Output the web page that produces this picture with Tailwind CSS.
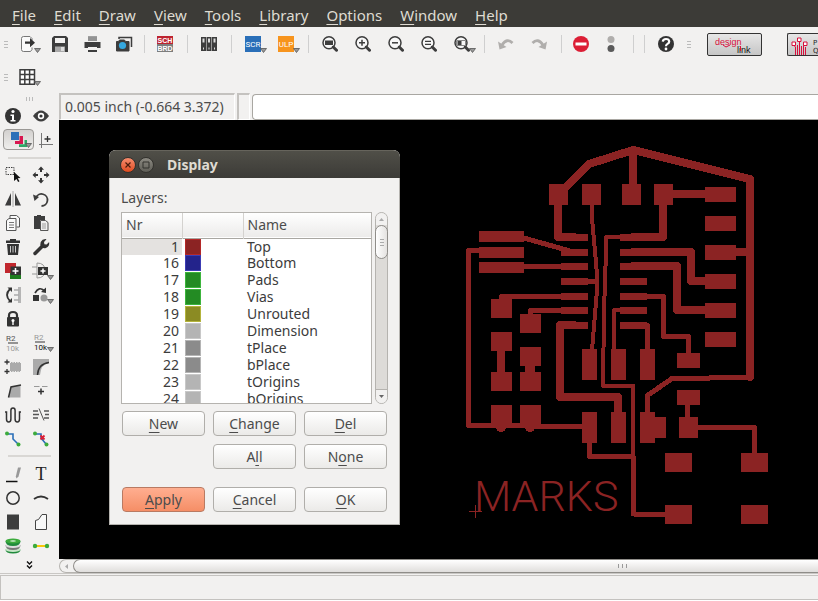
<!DOCTYPE html>
<html lang="en">
<head>
<meta charset="utf-8">
<title>Board editor</title>
<script src="https://cdn.jsdelivr.net/npm/@tailwindcss/browser@4"></script>
</head>
<body class="h-screen overflow-hidden bg-[#f2f1f0] font-['Noto_Sans','Open_Sans',sans-serif] text-sm leading-5 text-[#4c4c4c]">
<svg class="hidden">
  <symbol id="dd" viewBox="0 0 7 5"><path d="M.5.5h6L3.500 4.500z" fill="#999" stroke="#555" stroke-width=".8"/></symbol>
  <symbol id="lens" viewBox="0 0 16 16"><circle cx="7" cy="6.800" r="6" fill="#f8f8f8" stroke="#3d3d3d" stroke-width="1.500"/><path d="M11.300 11l3.200 3.200" stroke="#3d3d3d" stroke-width="3" stroke-linecap="round"/></symbol>
</svg>
<div class="flex h-full flex-col">
  <nav class="flex h-[27px] shrink-0 items-center gap-[18px] bg-[#3c3b37] px-3 pt-[3px] text-[15px] text-[#dfdbd2]" aria-label="Menu">
    <a href="#"><u class="underline-offset-3">F</u>ile</a>
    <a href="#"><u class="underline-offset-3">E</u>dit</a>
    <a href="#"><u class="underline-offset-3">D</u>raw</a>
    <a href="#"><u class="underline-offset-3">V</u>iew</a>
    <a href="#"><u class="underline-offset-3">T</u>ools</a>
    <a href="#"><u class="underline-offset-3">L</u>ibrary</a>
    <a href="#"><u class="underline-offset-3">O</u>ptions</a>
    <a href="#"><u class="underline-offset-3">W</u>indow</a>
    <a href="#"><u class="underline-offset-3">H</u>elp</a>
  </nav>

  <div class="flex h-[34px] shrink-0 items-center overflow-hidden *:shrink-0">
    <span class="flex w-3 flex-col items-center gap-[2px]"><i class="h-px w-1 bg-[#bbb]"></i><i class="h-px w-1 bg-[#bbb]"></i><i class="h-px w-1 bg-[#bbb]"></i></span>
    <button class="w-8" aria-label="Open"><svg class="h-6 w-8" viewBox="0 0 32 24"><path d="M20 8V6.500L18 4.500h-6.500a2 2 0 0 0-2 2v11a2 2 0 0 0 2 2h7l1.500-2v-2" fill="#fafafa" stroke="#777"/><path d="M13 9.500h5V6l5 4.700-5 4.600v-3.500h-5z" fill="#333"/><use href="#dd" x="22" y="16" width="7" height="5"/></svg></button>
    <button class="w-8" aria-label="Save"><svg class="h-6 w-8" viewBox="0 0 32 24"><path d="M10 4h12l2 2v14H8V6z" fill="#3d3d3d"/><path d="M11 6h10v5H11z" fill="#f2f1f0"/><path d="M11 14.500h10V20H11z" fill="#aaa"/><path d="M17 15h3v4h-3z" fill="#ddd"/></svg></button>
    <button class="w-8" aria-label="Print"><svg class="h-6 w-8" viewBox="0 0 32 24"><path d="M12 4h9v5h-9z" fill="#a0a0a0"/><path d="M12 6h9M12 8h9" stroke="#777" stroke-width=".6"/><path d="M8.500 10h16v6h-16z" fill="#3d3d3d"/><path d="M12 14.500h9V20h-9z" fill="#f2f1f0"/><path d="M12 13.500h9v1.500h-9zM12 18h9v2h-9z" fill="#3d3d3d"/></svg></button>
    <button class="w-8" aria-label="Export image"><svg class="h-6 w-8" viewBox="0 0 32 24"><path d="M11 7V5.500h12.500V15" fill="none" stroke="#3d3d3d" stroke-width="1.500"/><path d="M8.500 9.500h2l1-1.500h5l1 1.500h3.500v9.500H8.500z" fill="#3d3d3d" stroke="#3d3d3d"/><circle cx="14.500" cy="13.500" r="3.600" fill="#35a8e0"/></svg></button>
    <span class="flex w-[9px] justify-center"><i class="h-[18px] w-px bg-[#cfcfcf]"></i></span>
    <button class="w-[33px]" aria-label="Schematic/Board"><svg class="h-6 w-8" viewBox="0 0 32 24"><path d="M8 4h16v8H8z" fill="#be2430"/><path d="M8 12h16v8H8z" fill="#7d7d7d"/><g fill="#fff" font-family="Liberation Sans" font-weight="bold" font-size="7" text-anchor="middle"><text x="16" y="10.500">SCH</text><text x="16" y="18.500">BRD</text></g></svg></button>
    <span class="flex w-[11px] justify-center"><i class="h-[18px] w-px bg-[#cfcfcf]"></i></span>
    <button class="w-[33px]" aria-label="Use library"><svg class="h-6 w-8" viewBox="0 0 32 24"><path d="M8 5h5v14H8zM13.500 5h5v14h-5zM19 5h5v14h-5z" fill="#3d3d3d"/><path d="M9.500 6.500h2v4h-2zM15 6.500h2v4h-2zM20.500 6.500h2v4h-2zM10 15.500h1v2h-1zM15.500 15.500h1v2h-1zM21 15.500h1v2h-1z" fill="#ddd"/></svg></button>
    <span class="flex w-[11px] justify-center"><i class="h-[18px] w-px bg-[#cfcfcf]"></i></span>
    <button class="w-[33px]" aria-label="Script"><svg class="h-6 w-8" viewBox="0 0 32 24"><path d="M8 4h16v16H8z" fill="#2a6fb8"/><text x="16" y="15" fill="#fff" font-family="Roboto" font-size="8" text-anchor="middle">SCR</text><use href="#dd" x="23" y="16" width="7" height="5"/></svg></button>
    <button class="w-[33px]" aria-label="Run ULP"><svg class="h-6 w-8" viewBox="0 0 32 24"><path d="M8 4h16v16H8z" fill="#f7941d"/><text x="16" y="15" fill="#fff" font-family="Roboto" font-size="8" text-anchor="middle">ULP</text><use href="#dd" x="23" y="16" width="7" height="5"/></svg></button>
    <span class="flex w-[11px] justify-center"><i class="h-[18px] w-px bg-[#cfcfcf]"></i></span>
    <button class="w-[33px]" aria-label="Fit"><svg class="h-6 w-8" viewBox="0 0 32 24"><use href="#lens" x="8" y="4" width="16" height="16"/><path d="M11 8.500h8v4.500h-8z" fill="#3d3d3d"/></svg></button>
    <button class="w-[33px]" aria-label="Zoom in"><svg class="h-6 w-8" viewBox="0 0 32 24"><use href="#lens" x="8" y="4" width="16" height="16"/><path d="M12 10.800h6M15 7.800v6" stroke="#3d3d3d" stroke-width="1.500"/></svg></button>
    <button class="w-[33px]" aria-label="Zoom out"><svg class="h-6 w-8" viewBox="0 0 32 24"><use href="#lens" x="8" y="4" width="16" height="16"/><path d="M12 10.800h6" stroke="#3d3d3d" stroke-width="1.500"/></svg></button>
    <button class="w-[33px]" aria-label="Redraw"><svg class="h-6 w-8" viewBox="0 0 32 24"><use href="#lens" x="8" y="4" width="16" height="16"/><path d="M12 9.300h6M12 12.300h6" stroke="#3d3d3d" stroke-width="1.300"/></svg></button>
    <button class="w-[33px]" aria-label="Select zoom"><svg class="h-6 w-8" viewBox="0 0 32 24"><use href="#lens" x="8" y="4" width="16" height="16"/><path d="M10.500 8.500h9v5h-9z" fill="none" stroke="#888"/><path d="M11.500 9h4v4h-4z" fill="#3d3d3d"/><use href="#dd" x="23" y="16" width="7" height="5"/></svg></button>
    <span class="flex w-[11px] justify-center"><i class="h-[18px] w-px bg-[#cfcfcf]"></i></span>
    <button class="w-[33px]" aria-label="Undo"><svg class="h-6 w-8" viewBox="0 0 32 24"><path d="M22.500 11Q17 5.500 12 13" fill="none" stroke="#b0aeac" stroke-width="2.800"/><path d="M8 9.500l8.500 5.500-7 2.500z" fill="#b0aeac"/></svg></button>
    <button class="w-[33px]" aria-label="Redo"><svg class="h-6 w-8" viewBox="0 0 32 24"><path d="M9.500 11Q15 5.500 20 13" fill="none" stroke="#b0aeac" stroke-width="2.800"/><path d="M24 9.500L15.500 15l7 2.500z" fill="#b0aeac"/></svg></button>
    <span class="flex w-[11px] justify-center"><i class="h-[18px] w-px bg-[#cfcfcf]"></i></span>
    <button class="flex w-7 justify-center" aria-label="Stop"><svg class="h-6 w-4" viewBox="8 0 16 24"><circle cx="16" cy="12" r="8" fill="#dc1e35"/><path d="M10.500 10.500h11v3h-11z" fill="#fff"/></svg></button>
    <button class="flex w-8 justify-center" aria-label="Go"><svg class="h-6 w-4" viewBox="8 0 16 24"><circle cx="16" cy="7.500" r="3.500" fill="#b0aeac"/><circle cx="16" cy="16.500" r="3.500" fill="#5a5a5a"/></svg></button>
    <span class="ml-px flex w-[11px] justify-center"><i class="h-[18px] w-px bg-[#cfcfcf]"></i></span>
    <span class="flex w-[11px] justify-center"><i class="h-[18px] w-px bg-[#cfcfcf]"></i></span>
    <button class="w-[33px]" aria-label="Help"><svg class="h-6 w-8" viewBox="0 0 32 24"><circle cx="16" cy="12" r="8" fill="#333"/><path d="M12.800 9.700q.2-2.700 3.200-2.700t3.200 2.400q0 1.600-1.700 2.500-1.500.8-1.500 2.300" fill="none" stroke="#fff" stroke-width="2.200"/><circle cx="16" cy="17" r="1.400" fill="#fff"/></svg></button>
    <span class="flex w-3 flex-col items-center gap-[2px]"><i class="h-px w-1 bg-[#bbb]"></i><i class="h-px w-1 bg-[#bbb]"></i><i class="h-px w-1 bg-[#bbb]"></i></span>
    <button class="ml-3 h-[23px] w-[55px] rounded-[2px] border border-[#333] bg-linear-to-b from-[#e6e6e6] to-[#c6c6c6]" aria-label="designlink"><svg class="h-[21px] w-[53px]" viewBox="0 0 53 21"><text x="7" y="11" font-family="Liberation Sans" font-size="9" fill="#d8103c">design</text><text x="29" y="19" font-family="Liberation Sans" font-size="9" fill="#111">link</text><path d="M15 11l3 2 4-2" fill="none" stroke="#d8103c"/><path d="M32.500 12v5" stroke="#d8103c"/></svg></button>
    <button class="ml-[25px] h-[23px] min-w-0 flex-1 !shrink overflow-hidden rounded-l-[2px] border border-r-0 border-[#333] bg-linear-to-b from-[#e6e6e6] to-[#c6c6c6]" aria-label="PCB quote"><svg class="h-[21px] w-full" viewBox="0 0 30 21" preserveAspectRatio="xMinYMid slice" fill="none"><g stroke="#d8103c"><path d="M7.500 21v-8l-2-2M9.500 21V11M11.500 21V8M13.500 21v-9M15.500 21V11M17.500 21v-8"/><path d="M4 8h3.500v3.500H4zM9.500 4H13v3.500H9.500zM15.500 8H19v3.500h-3.500z" fill="#fff"/></g><g fill="#222" font-family="DejaVu Sans" font-size="7"><text x="25" y="11">P</text><text x="25" y="19">Q</text></g></svg></button>
  </div>

  <div class="flex h-8 shrink-0 items-center">
    <span class="flex w-3 flex-col items-center gap-[2px]"><i class="h-px w-1 bg-[#bbb]"></i><i class="h-px w-1 bg-[#bbb]"></i><i class="h-px w-1 bg-[#bbb]"></i></span>
    <button class="w-8" aria-label="Grid"><svg class="h-6 w-8" viewBox="0 0 32 24"><path d="M8 4.800h14.500v14.500H8zM8 9.600h14.500M8 14.400h14.500M12.800 4.800v14.500M17.600 4.800v14.500" fill="#fff" stroke="#3d3d3d" stroke-width="1.500"/><use href="#dd" x="22" y="16" width="7" height="5"/></svg></button>
  </div>

  <div class="flex min-h-0 flex-1">
    <aside class="flex w-[59px] shrink-0 flex-col">
      <span class="flex h-[11px] items-center justify-center gap-[2px]"><i class="h-1 w-px bg-[#bbb]"></i><i class="h-1 w-px bg-[#bbb]"></i><i class="h-1 w-px bg-[#bbb]"></i></span>
      <div class="grid w-14 grid-cols-2 [&_button]:h-6 [&_svg]:h-6 [&_svg]:w-7">
        <button aria-label="Info"><svg viewBox="0 0 28 24"><circle cx="13" cy="12" r="8" fill="#333"/><circle cx="13" cy="7.500" r="1.600" fill="#fff"/><path d="M10.500 10.500H14V16h1.500v1.500h-5V16H12v-4h-1.500z" fill="#fff"/></svg></button>
        <button aria-label="Show"><svg viewBox="0 0 28 24"><path d="M5 12q8-11 16 0-8 11-16 0z" fill="#3d3d3d"/><circle cx="13" cy="12" r="3.200" fill="#fff"/><circle cx="13" cy="12" r="1.600" fill="#333"/></svg></button>
        <button aria-label="Display" aria-pressed="true"><svg class="overflow-visible" viewBox="0 0 28 24"><defs><linearGradient id="pressed" x2="0" y2="1"><stop stop-color="#d2d0ce"/><stop offset="1" stop-color="#f0efed"/></linearGradient></defs><rect x="3.500" y="1.500" width="30" height="20" rx="3.500" fill="url(#pressed)" stroke="#9a9895"/><path d="M11 4h8v8h-8z" fill="#2a6fb8"/><path d="M19.500 8H23v8h-8v-3h4.500z" fill="#d8174f"/><path d="M24.500 12H27v7h-8v-2.800h5.500z" fill="#2fa866"/><use href="#dd" x="25" y="15" width="7" height="5"/></svg></button>
        <button aria-label="Mark"><svg viewBox="0 0 28 24"><path d="M13.500 5v15M11 16.500h14" stroke="#777"/><path d="M19.500 8v6M16.500 11h6" stroke="#333" stroke-width="1.300"/></svg></button>
      </div>
      <hr class="mx-2 mt-[5px] mb-1 border-t-2 border-[#d9d7d4]">
      <div class="grid w-14 grid-cols-2 [&_button]:h-6 [&_svg]:h-6 [&_svg]:w-7">
        <button aria-label="Group"><svg viewBox="0 0 28 24"><path d="M6 4.500h8v7H6z" fill="none" stroke="#3d3d3d" stroke-dasharray="1.500 1"/><path d="M14 9l6.500 6-2.800.3 1.800 3-1.400.8-1.600-3.200L14 18z" fill="#111"/></svg></button>
        <button aria-label="Move"><svg viewBox="0 0 28 24"><path d="M13 3.500l3 3.200h-2V9h-2V6.700h-2zM13 20.500l3-3.200h-2V15h-2v2.300h-2zM4.500 12l3.200-3v2H10v2H7.700v2zM21.500 12l-3.200-3v2H16v2h2.300v2z" fill="#333"/></svg></button>
        <button aria-label="Mirror"><svg viewBox="0 0 28 24"><path d="M11 6v12.500H5zM15 6v12.500h6z" fill="#3d3d3d"/><path d="M13 4v16" stroke="#aaa"/></svg></button>
        <button aria-label="Rotate"><svg viewBox="0 0 28 24"><path d="M8 10.500a6 6 0 1 1 5.500 8.500" fill="none" stroke="#3d3d3d" stroke-width="1.800"/><path d="M5 7.500l1.500 6.500 4.500-4z" fill="#3d3d3d"/></svg></button>
        <button aria-label="Copy"><svg viewBox="0 0 28 24"><path d="M10 7V4.500h6.500l3 2.500v9h-3" fill="#f8f8f8" stroke="#555"/><path d="M6.500 9.500L9 7.500h7v12H6.500z" fill="#fafafa" stroke="#555"/><path d="M9 11.500h5M9 14h5M9 16.500h5" stroke="#777"/></svg></button>
        <button aria-label="Paste"><svg viewBox="0 0 28 24"><path d="M6 5h3V4h4v1h4v4h-5v9H6z" fill="#3d3d3d"/><path d="M12.500 9.500h5l2.500 2v8h-7.500z" fill="#eee" stroke="#555"/><path d="M14 13h4M14 15h4M14 17h4" stroke="#888" stroke-width=".8"/></svg></button>
        <button aria-label="Delete"><svg viewBox="0 0 28 24"><path d="M6 5.500h4V4h6v1.500h4V8H6zM7 9h12l-1 11H8z" fill="#333"/><path d="M10.500 11v6.500M13 11v6.500M15.500 11v6.500" stroke="#ddd" stroke-width=".9"/></svg></button>
        <button aria-label="Change"><svg viewBox="0 0 28 24"><path d="M7 18.500l7-7" stroke="#333" stroke-width="3.500" stroke-linecap="round"/><path d="M18.500 4.200L16 7l.4 2.200 2.200.4 2.500-2.500q.8 4.600-3.200 5.900-2.300.6-4.300-.8Q11.500 9.500 12.700 7q1.800-3.400 5.800-2.800z" fill="#333"/></svg></button>
        <button aria-label="Add"><svg viewBox="0 0 28 24"><path d="M5 4h11v10H5z" fill="#c1272d"/><path d="M10 14h11v6H10z" fill="#1e7d1e"/><path d="M10.500 7.500h10.500V16H10.500z" fill="#333"/><path d="M12.500 12h6M15.500 9v6" stroke="#fff" stroke-width="1.500"/></svg></button>
        <button aria-label="Replace"><svg viewBox="0 0 28 24"><path d="M4 8h5M4 15h5M9 4v15M9 4q8 0 8 7.500T9 19" fill="none" stroke="#999"/><path d="M10 8h10v8H10z" fill="#333"/><path d="M12.500 12h5M15 9.500v5" stroke="#fff" stroke-width="1.500"/><use href="#dd" x="19" y="16" width="7" height="5"/></svg></button>
        <button aria-label="Pinswap"><svg viewBox="0 0 28 24"><path d="M18 4h3v16h-3z" fill="#b5b5b5"/><path d="M14 7h5M14 12h5M14 17h5" stroke="#aaa" stroke-width="1.500"/><path d="M10 6q-6 6 0 12" fill="none" stroke="#333" stroke-width="1.800"/><path d="M7.500 4.500H12V9zM7.500 19.500H12V15z" fill="#333"/></svg></button>
        <button aria-label="Gateswap"><svg viewBox="0 0 28 24"><path d="M7 10q4-7 9-2.500" fill="none" stroke="#333" stroke-width="1.700"/><path d="M18 4.500V10l-5-1z" fill="#333"/><path d="M5 12h6v6H5z" fill="#333"/><circle cx="16" cy="15" r="3.500" fill="#999"/><use href="#dd" x="19" y="16" width="7" height="5"/></svg></button>
        <button aria-label="Lock"><svg viewBox="0 0 28 24"><path d="M9 12V8.500q0-3.500 4-3.500t4 3.500V12" fill="none" stroke="#333" stroke-width="2.200"/><rect x="7" y="10" width="12" height="9.500" rx="1" fill="#333"/><path d="M12.300 14h1.400v4h-1.400z" fill="#fff"/><circle cx="13" cy="13.500" r="1.500" fill="#fff"/></svg></button>
        <span></span>
        <button aria-label="Name"><svg viewBox="0 0 28 24"><g font-family="Roboto" font-size="8"><text x="6" y="9.500" fill="#555">R2</text><text x="6" y="20" fill="#999">10k</text></g><path d="M8 12h10" stroke="#555" stroke-width="1.200"/></svg></button>
        <button aria-label="Value"><svg viewBox="0 0 28 24"><g font-family="Roboto" font-size="8"><text x="6" y="8.500" fill="#999">R2</text><text x="6" y="19" fill="#111">10k</text></g><path d="M7 11h10" stroke="#555" stroke-width="1.200"/><use href="#dd" x="19" y="16" width="7" height="5"/></svg></button>
        <button aria-label="Smash"><svg viewBox="0 0 28 24"><path d="M10 8h11v8H10z" fill="#aaa"/><path d="M11 7.500h10M11 16.500h10" stroke="#aaa" stroke-dasharray="1.500 1"/><path d="M7 4.500v5M4.500 7h5M7 14v5M4.500 16.500h5" stroke="#333" stroke-width="1.300"/></svg></button>
        <button aria-label="Miter"><svg viewBox="0 0 28 24"><path d="M5 4h16v4q-8 1-9 12H5z" fill="#aaa"/><path d="M9.500 20Q10 9 21 7.500" fill="none" stroke="#333" stroke-width="1.500"/></svg></button>
        <button aria-label="Split"><svg viewBox="0 0 28 24"><path d="M8.500 18.500L11 8l9.500-2v12.500z" fill="#aaa"/><path d="M8.500 18.500L11 8l10-2" fill="none" stroke="#333" stroke-width="1.500"/></svg></button>
        <button aria-label="Optimize"><svg viewBox="0 0 28 24"><path d="M6 7.500h5.500M14 7.500h5.500" stroke="#999"/><path d="M13 9.500v6M10 12.500h6" stroke="#333" stroke-width="1.500"/></svg></button>
        <button aria-label="Meander"><svg viewBox="0 0 28 24"><path d="M5 9h1.500v7q0 3 2.200 3t2.200-3V7.500q0-2.500 2.100-2.500t2.100 2.500V16q0 3 2.200 3t2.200-3V9H21" fill="none" stroke="#333" stroke-width="1.500"/></svg></button>
        <button aria-label="Ratsnest gap"><svg viewBox="0 0 28 24"><path d="M5 8h5M5 11.500h6M5 15h5M16 8h5M17 11.500h4M16 15h5" stroke="#555" stroke-width="1.300"/><path d="M11 5.500l5 12" stroke="#555"/></svg></button>
        <button aria-label="Route"><svg viewBox="0 0 28 24"><path d="M8 7h5v5l5 5" fill="none" stroke="#2a6fb8" stroke-width="1.600"/><circle cx="7" cy="6.500" r="2" fill="#3cab3c"/><circle cx="18.500" cy="17.500" r="2" fill="#3cab3c"/></svg></button>
        <button aria-label="Ripup"><svg viewBox="0 0 28 24"><path d="M8 7h5v4l5 6" fill="none" stroke="#2a6fb8" stroke-width="1.600"/><circle cx="7" cy="6.500" r="2" fill="#3cab3c"/><circle cx="18.500" cy="17.500" r="2" fill="#3cab3c"/><path d="M12.500 8.500l4 4M16.500 8.500l-4 4" stroke="#dc1e35" stroke-width="1.800"/></svg></button>
      </div>
      <hr class="mx-2 mt-1 mb-[5px] border-t-2 border-[#d9d7d4]">
      <div class="grid w-14 grid-cols-2 [&_button]:h-6 [&_svg]:h-6 [&_svg]:w-7">
        <button aria-label="Wire"><svg viewBox="0 0 28 24"><path d="M6 19.500h11.500" stroke="#111" stroke-width="1.500"/><path d="M18 5.500h3l-2.500 9-2 2-.7-2z" fill="#999"/></svg></button>
        <button aria-label="Text"><svg viewBox="0 0 28 24"><text x="13" y="17.500" text-anchor="middle" font-family="Liberation Serif" font-size="18" fill="#222">T</text></svg></button>
        <button aria-label="Circle"><svg viewBox="0 0 28 24"><circle cx="13" cy="12" r="6.200" fill="none" stroke="#333" stroke-width="1.500"/></svg></button>
        <button aria-label="Arc"><svg viewBox="0 0 28 24"><path d="M6 13q7-5 14 0" fill="none" stroke="#333" stroke-width="1.800"/></svg></button>
        <button aria-label="Rectangle"><svg viewBox="0 0 28 24"><path d="M7 4.500h12v15H7z" fill="#3d3d3d"/></svg></button>
        <button aria-label="Polygon"><svg viewBox="0 0 28 24"><path d="M7.500 19.500v-9l3-1 3.500-5h4.500v15z" fill="#f8f8f8" stroke="#444"/></svg></button>
        <button aria-label="Via"><svg viewBox="0 0 28 24"><path d="M5.500 15.500q0 4 7.500 4t7.500-4z" fill="#1f8a3b"/><ellipse cx="13" cy="15.500" rx="7.500" ry="2.500" fill="#c8e6c8"/><path d="M5.500 11q0 5 7.500 5t7.500-5z" fill="#777"/><ellipse cx="13" cy="11.500" rx="7.500" ry="2.500" fill="#ddd"/><path d="M5.500 7q0 5 7.500 5t7.500-5z" fill="#1f8a3b"/><ellipse cx="13" cy="7" rx="7.500" ry="2.500" fill="#3cab3c"/><ellipse cx="13" cy="7" rx="3" ry=".8" fill="#d6f0d6"/></svg></button>
        <button aria-label="Signal"><svg viewBox="0 0 28 24"><path d="M7 12h12" stroke="#f7c80a" stroke-width="2"/><circle cx="7" cy="12" r="2.200" fill="#3cab3c"/><circle cx="19" cy="12" r="2.200" fill="#3cab3c"/></svg></button>
      </div>
      <button class="flex h-[14px] items-center justify-center" aria-label="More tools"><svg class="h-2 w-[7px]" viewBox="0 0 7 8"><path d="M1 .5l2.500 2.500L6 .5M1 4.500L3.500 7 6 4.500" fill="none" stroke="#111" stroke-width="1.400"/></svg></button>
    </aside>

    <main class="flex min-w-0 flex-1 flex-col">
      <div class="flex h-[27px] shrink-0 gap-[2px]">
        <output class="w-[176px] shrink-0 border-t-2 border-r border-b border-l-2 border-[#c4c2bf] border-r-white border-b-white pl-1 leading-6 whitespace-nowrap">0.005 inch (-0.664 3.372)</output>
        <span class="w-[13px] shrink-0 border-t-2 border-r border-b border-l-2 border-[#c4c2bf] border-r-white border-b-white"></span>
        <input aria-label="Command" class="mt-px h-[26px] min-w-0 flex-1 rounded-l-[4px] border border-r-0 border-[#a9a7a2] bg-white px-2">
      </div>

      <div class="relative min-h-0 flex-1 overflow-hidden bg-black">
        <svg class="absolute top-0 left-0 h-[439px] w-[759px]" viewBox="59 120 759 439" role="img" aria-label="Board layout" shape-rendering="crispEdges">
          <g fill="#8b2323">
            <path d="M549 184h19v21h-19zM582 184h19v21h-19zM622 184h19v21h-19zM654 184h19v21h-19z"/>
            <path d="M561 234h27v7h-27zM561 249h27v7h-27zM561 263h27v7h-27zM561 278h27v7h-27zM561 293h27v7h-27zM561 307h27v7h-27zM561 322h27v7h-27z"/>
            <path d="M620 234h27v7h-27zM620 249h27v7h-27zM620 263h27v7h-27zM620 278h27v7h-27zM620 293h27v7h-27zM620 307h27v7h-27zM620 322h27v7h-27z"/>
            <path d="M479 231h45v11h-45zM479 247h45v11h-45zM479 262h45v11h-45z"/>
            <path d="M491 299h21v19h-21zM520 314h21v19h-21zM491 332h21v19h-21zM520 347h21v19h-21zM491 372h21v19h-21zM520 372h21v19h-21zM491 405h21v19h-21zM520 405h21v19h-21z"/>
            <path d="M582 349h15v31h-15zM611 349h15v31h-15zM640 349h15v31h-15zM582 412h15v31h-15zM611 412h15v31h-15zM640 412h15v31h-15zM647 417h19v21h-19z"/>
            <path d="M705 187h31v15h-31zM705 216h31v15h-31zM705 245h31v15h-31zM705 274h31v15h-31zM705 303h31v15h-31zM705 332h31v15h-31z"/>
            <path d="M677 353h23v15h-23zM677 390h23v15h-23zM679 417h19v21h-19zM665 453h27v19h-27zM741 453h27v19h-27zM665 505h27v19h-27zM741 505h27v19h-27z"/>
            <circle cx="501" cy="427" r="5"/><circle cx="530" cy="427" r="5"/>
          </g>
          <g fill="none" stroke="#8b2323" stroke-linejoin="round">
            <path stroke-width="8" d="M563 190l26-26 44-14 117 29v198M633 150v34M558 205v32h18M673 194h32M663 205v32h-32M631 252h60v29h14M631 266h46v44h28M736 252h14M576 325h-16v72h58v15M501 350v24"/>
            <path stroke-width="8" stroke-linecap="round" d="M750 374v3"/>
            <path stroke-width="10" d="M530 365v8"/>
            <path stroke-width="5" d="M750 377.500h-40l-1 1h-37l-24.500 17V412M524 238l46 13M524 266.500h37M588 281.500h8M479 250.500h-10.500v175H534l1 1h48M561 296.500h-59.500v4M561 310.500h-30.500v4M640 325.500h7.500V350M647 296.500h16.500v40h25V353M687.500 405v12M698 427.500h56.500V453M589.500 443v13.500h44M633.500 456v58H665"/>
            <path stroke-width="4" d="M592 205v13l5 56v16l-5 60M620 237h-14v15l-2 60-1 74h30v72M620 310h-6v40"/>
            <path stroke-width="1" d="M469 511.500h13M475.500 505v13"/>
          </g>
          <text x="474" y="511" fill="#8b2323" font-family="Roboto, sans-serif" font-weight="300" font-size="43">MARKS</text>
        </svg>

        <section role="dialog" aria-labelledby="dlg-title" class="absolute top-[30px] left-[50px] w-[291px] overflow-hidden rounded-t-[7px] bg-[#f2f1f0] shadow-[inset_0_0_0_1px_#b5b3af]">
          <header class="flex h-7 items-center gap-[2px] border-t border-[#66645c] bg-linear-to-b from-[#504f48] to-[#3c3b37] pl-[11px]">
            <button class="size-4 rounded-full border border-[#33322e] bg-linear-to-b from-[#f58b6c] to-[#df4a1c]" aria-label="Close"><svg viewBox="0 0 14 14"><path d="M4.500 4.500l5 5M9.500 4.500l-5 5" stroke="#4a1c0c" stroke-width="1.200"/></svg></button>
            <button class="size-4 rounded-full border border-[#33322e] bg-linear-to-b from-[#8c8a82] to-[#5f5e57]" aria-label="Maximize"><svg viewBox="0 0 14 14"><path d="M4 4h6v6H4z" fill="none" stroke="#33322e"/></svg></button>
            <h1 id="dlg-title" class="pl-[11px] font-bold text-[#dfdbd2]">Display</h1>
          </header>
          <div class="px-3 pt-[10px] pb-[13px]">
            <p id="layers-label">Layers:</p>
            <div class="mt-1 flex h-48 gap-[3px]">
              <div class="min-w-0 flex-1 overflow-hidden border border-[#b5b3af] bg-white">
                <table class="w-full table-fixed border-collapse" aria-labelledby="layers-label">
                  <colgroup><col class="w-[60px]"><col class="w-[61px]"><col></colgroup>
                  <thead>
                    <tr class="h-[25px] border-b border-[#a9a7a2] bg-linear-to-b from-white to-[#ecebea] text-left">
                      <th class="border-r border-[#d4d2cf] p-0 pl-1 font-normal">Nr</th>
                      <th class="border-r border-[#d4d2cf] p-0"></th>
                      <th class="p-0 pl-1 font-normal">Name</th>
                    </tr>
                  </thead>
                  <tbody class="leading-[15px] text-[#3c3c3c] [&_i]:ml-[3px] [&_i]:block [&_i]:size-4 [&_i]:border [&_td]:p-0 [&_td]:align-top [&_td:first-child]:pr-[3px] [&_td:first-child]:text-right [&_td:last-child]:pl-1 [&_tr]:h-[17px]">
                    <tr><td class="bg-[#e4e2e0]">1</td><td><i class="border-[#b42828] bg-[#8b2323]"></i></td><td>Top</td></tr>
                    <tr><td>16</td><td><i class="border-[#3c3cb4] bg-[#23238b]"></i></td><td>Bottom</td></tr>
                    <tr><td>17</td><td><i class="border-[#3cb43c] bg-[#238b23]"></i></td><td>Pads</td></tr>
                    <tr><td>18</td><td><i class="border-[#3cb43c] bg-[#238b23]"></i></td><td>Vias</td></tr>
                    <tr><td>19</td><td><i class="border-[#b4b43c] bg-[#8b8b23]"></i></td><td>Unrouted</td></tr>
                    <tr><td>20</td><td><i class="border-[#c8c8c8] bg-[#b4b4b4]"></i></td><td>Dimension</td></tr>
                    <tr><td>21</td><td><i class="border-[#b4b4b4] bg-[#8b8b8b]"></i></td><td>tPlace</td></tr>
                    <tr><td>22</td><td><i class="border-[#b4b4b4] bg-[#8b8b8b]"></i></td><td>bPlace</td></tr>
                    <tr><td>23</td><td><i class="border-[#c8c8c8] bg-[#b4b4b4]"></i></td><td>tOrigins</td></tr>
                    <tr><td>24</td><td><i class="border-[#c8c8c8] bg-[#b4b4b4]"></i></td><td>bOrigins</td></tr>
                  </tbody>
                </table>
              </div>
              <div class="flex w-[13px] flex-col items-center rounded-full border border-[#b5b3af] bg-[#dddbd8]">
                <span class="flex h-3 w-full items-center justify-center rounded-t-full bg-[#f2f1f0]"><svg class="h-[3px] w-[5px]" viewBox="0 0 5 3"><path d="M0 3L2.500 0 5 3z" fill="#aaa"/></svg></span>
                <span class="-mx-px flex h-[34px] w-[13px] flex-col items-center justify-center gap-[2px] self-center rounded-full border border-[#8f8d89] bg-linear-to-r from-white to-[#e4e2e0]"><i class="h-px w-1 bg-[#aaa]"></i><i class="h-px w-1 bg-[#aaa]"></i><i class="h-px w-1 bg-[#aaa]"></i></span>
                <span class="mt-auto flex h-[14px] w-full items-center justify-center rounded-b-full border-t border-[#b5b3af] bg-[#f2f1f0]"><svg class="h-[3px] w-[5px]" viewBox="0 0 5 3"><path d="M0 0l2.500 3L5 0z" fill="#666"/></svg></span>
              </div>
            </div>
            <div class="mt-[7px] grid grid-cols-3 gap-2 px-px [&_button]:h-[25px] [&_button]:rounded-[4px] [&_button]:border">
              <button class="border-[#b0aeaa] bg-linear-to-b from-white to-[#ebeae8]"><u class="underline-offset-3">N</u>ew</button>
              <button class="border-[#b0aeaa] bg-linear-to-b from-white to-[#ebeae8]"><u class="underline-offset-3">C</u>hange</button>
              <button class="border-[#b0aeaa] bg-linear-to-b from-white to-[#ebeae8]"><u class="underline-offset-3">D</u>el</button>
              <button class="col-start-2 border-[#b0aeaa] bg-linear-to-b from-white to-[#ebeae8]">A<u class="underline-offset-3">l</u>l</button>
              <button class="border-[#b0aeaa] bg-linear-to-b from-white to-[#ebeae8]">N<u class="underline-offset-3">o</u>ne</button>
            </div>
            <div class="mt-[18px] grid grid-cols-3 gap-2 px-px [&_button]:h-[25px] [&_button]:rounded-[4px] [&_button]:border">
              <button class="border-[#b97a62] bg-linear-to-b from-[#ffae90] to-[#f58e66]"><u class="underline-offset-3">A</u>pply</button>
              <button class="border-[#b0aeaa] bg-linear-to-b from-white to-[#ebeae8]"><u class="underline-offset-3">C</u>ancel</button>
              <button class="border-[#b0aeaa] bg-linear-to-b from-white to-[#ebeae8]"><u class="underline-offset-3">O</u>K</button>
            </div>
          </div>
        </section>
      </div>

      <div class="flex h-[14px] shrink-0 items-center rounded-l-full border-y border-l border-[#b5b3af] bg-[#f2f1f0]">
        <span class="flex w-[13px] shrink-0 justify-center"><svg class="h-[5px] w-[3px]" viewBox="0 0 3 5"><path d="M3 0v5L0 2.500z" fill="#aaa"/></svg></span>
        <span class="flex h-[14px] min-w-0 flex-1 items-center justify-end gap-[3px] rounded-l-full border border-r-0 border-[#8f8d89] bg-linear-to-b from-white to-[#e0dedc] pr-[191px]"><i class="h-1 w-px bg-[#999]"></i><i class="h-1 w-px bg-[#999]"></i><i class="h-1 w-px bg-[#999]"></i></span>
      </div>
    </main>
  </div>

  <footer class="h-7 shrink-0 border-t border-b border-[#c9c7c4] border-b-white pt-px"><div class="h-full border border-r-0 border-[#c4c2bf]"></div></footer>
</div>
</body>
</html>
